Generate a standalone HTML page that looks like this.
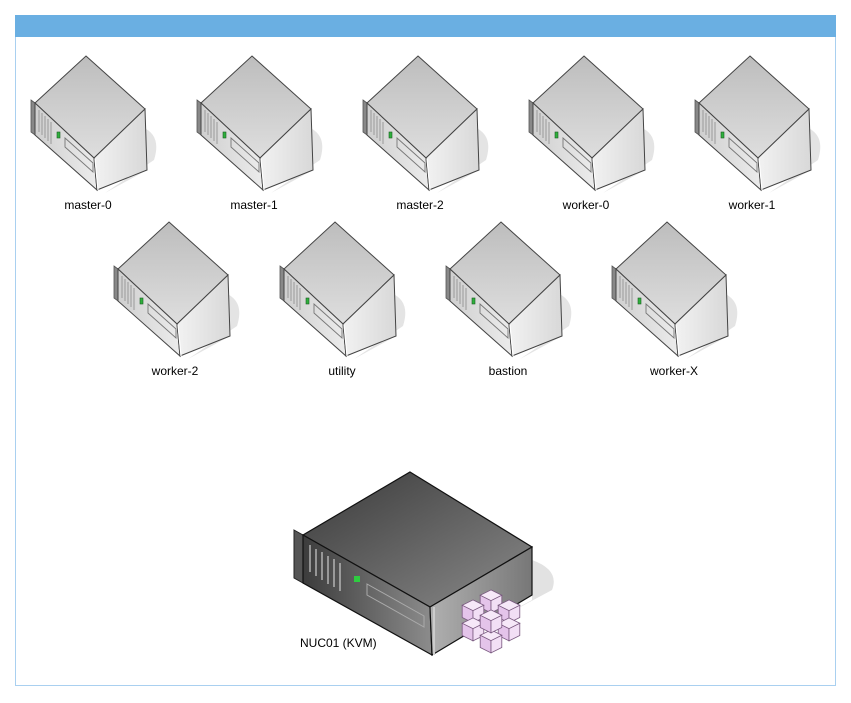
<!DOCTYPE html>
<html><head><meta charset="utf-8"><style>
body{margin:0;background:#fff;width:851px;height:703px;overflow:hidden;position:relative;font-family:"Liberation Sans",Arial,sans-serif}
.frame{position:absolute;left:15px;top:15px;width:819px;height:670px;border:1px solid #a9d0f0;border-top:none}
.hdr{position:absolute;left:15px;top:15px;width:821px;height:22px;background:#6aafe2}
.lbl{position:absolute;font-size:12px;color:#000;width:120px;text-align:center}
svg{position:absolute;left:0;top:0}
</style></head><body>
<div class="frame"></div><div class="hdr"></div>
<svg width="851" height="703">
<defs>
<linearGradient id="gt" x1="0" y1="0" x2="0" y2="1"><stop offset="0" stop-color="#bdbdbd"/><stop offset="1" stop-color="#dedede"/></linearGradient>
<linearGradient id="gf" x1="0" y1="0" x2="1" y2="0"><stop offset="0" stop-color="#cfcfcf"/><stop offset="1" stop-color="#ececec"/></linearGradient>
<linearGradient id="gr" x1="0" y1="0" x2="1" y2="0"><stop offset="0" stop-color="#f2f2f2"/><stop offset="1" stop-color="#d8d8d8"/></linearGradient>
<linearGradient id="dt" x1="0" y1="0" x2="1" y2="1"><stop offset="0" stop-color="#3a3a3a"/><stop offset="1" stop-color="#8a8a8a"/></linearGradient>
<linearGradient id="df" x1="0" y1="0" x2="1" y2="0"><stop offset="0" stop-color="#3c3c3c"/><stop offset="1" stop-color="#8c8c8c"/></linearGradient>
<linearGradient id="dr" x1="0" y1="0" x2="1" y2="0"><stop offset="0" stop-color="#b0b0b0"/><stop offset="1" stop-color="#777"/></linearGradient>
<g id="srv">
<path d="M112,72 Q132,80 124,105 L75,138 L117,115 Z" fill="#e4e4e4"/>
<path d="M1,45 L5,48 L5,80 L1,77 Z" fill="#888" stroke="#555" stroke-width="0.8"/>
<path d="M56,1 L115,54 L64,103 L5,48 Z" fill="url(#gt)" stroke="#444" stroke-width="1"/>
<path d="M5,48 L64,103 L67,135 L5,80 Z" fill="url(#gf)" stroke="#444" stroke-width="1"/>
<path d="M64,103 L115,54 L117,115 L67,135 Z" fill="url(#gr)" stroke="#444" stroke-width="1"/>
<path d="M9,55 L9,77 M12,58 L12,80 M15,61 L15,83 M18,64 L18,86 M21,67 L21,89" stroke="#999" stroke-width="1"/>
<rect x="27" y="77" width="3" height="6" fill="#2eb03c" stroke="#1b5e22" stroke-width="0.6"/>
<path d="M35,83 L63,108 L63,117 L35,92 Z" fill="none" stroke="#777" stroke-width="0.9"/>
<path d="M65,104 L68,135" stroke="#fff" stroke-width="1.2"/>
</g>
<g id="cb"><path d="M0,-6 L8,-2 L0,2 L-8,-2 Z" fill="#f6e8f8"/><path d="M-8,-2 L0,2 L0,11 L-8,7 Z" fill="#e4c4ea"/><path d="M0,2 L8,-2 L8,7 L0,11 Z" fill="#f2dff5"/></g>
</defs>
<use href="#srv" x="30" y="55"/>
<use href="#srv" x="196" y="55"/>
<use href="#srv" x="362" y="55"/>
<use href="#srv" x="528" y="55"/>
<use href="#srv" x="694" y="55"/>
<use href="#srv" x="113" y="221"/>
<use href="#srv" x="279" y="221"/>
<use href="#srv" x="445" y="221"/>
<use href="#srv" x="611" y="221"/>
<!-- NUC -->
<path d="M532,560 Q560,570 552,590 L440,650 L532,600 Z" fill="#e2e2e2"/>
<path d="M294,530 L303,535 L303,583 L294,578 Z" fill="#555" stroke="#222"/>
<path d="M410,472 L532,547 L430,607 L303,535 Z" fill="url(#dt)" stroke="#111" stroke-width="1.2"/>
<path d="M303,535 L430,607 L432,655 L303,583 Z" fill="url(#df)" stroke="#111" stroke-width="1.2"/>
<path d="M430,607 L532,547 L532,595 L432,655 Z" fill="url(#dr)" stroke="#111" stroke-width="1.2"/>
<path d="M310,545 L310,572 M316,549 L316,576 M322,552 L322,580 M328,556 L328,584 M334,559 L334,587 M340,563 L340,591" stroke="#ccc" stroke-width="1.2"/>
<rect x="354" y="576" width="6" height="6" fill="#2ecc40"/>
<path d="M367,584 L424,616 L424,627 L367,595 Z" fill="none" stroke="#aaa" stroke-width="1"/>
<path d="M434,607 L434,655" stroke="#ccc" stroke-width="2"/>
<g stroke="#7a5a80" stroke-width="0.6">
<use href="#cb" transform="translate(491,598) scale(1.35)"/>
<use href="#cb" transform="translate(473,608) scale(1.35)"/>
<use href="#cb" transform="translate(509,608) scale(1.35)"/>
<use href="#cb" transform="translate(473,626) scale(1.35)"/>
<use href="#cb" transform="translate(509,626) scale(1.35)"/>
<use href="#cb" transform="translate(491,638) scale(1.35)"/>
<use href="#cb" transform="translate(491,618) scale(1.35)"/>
</g>
</svg>
<div class="lbl" style="left:28px;top:198px">master-0</div>
<div class="lbl" style="left:194px;top:198px">master-1</div>
<div class="lbl" style="left:360px;top:198px">master-2</div>
<div class="lbl" style="left:526px;top:198px">worker-0</div>
<div class="lbl" style="left:692px;top:198px">worker-1</div>
<div class="lbl" style="left:115px;top:364px">worker-2</div>
<div class="lbl" style="left:282px;top:364px">utility</div>
<div class="lbl" style="left:448px;top:364px">bastion</div>
<div class="lbl" style="left:614px;top:364px">worker-X</div>
<div class="lbl" style="left:300px;top:636px;text-align:left">NUC01 (KVM)</div>
</body></html>
